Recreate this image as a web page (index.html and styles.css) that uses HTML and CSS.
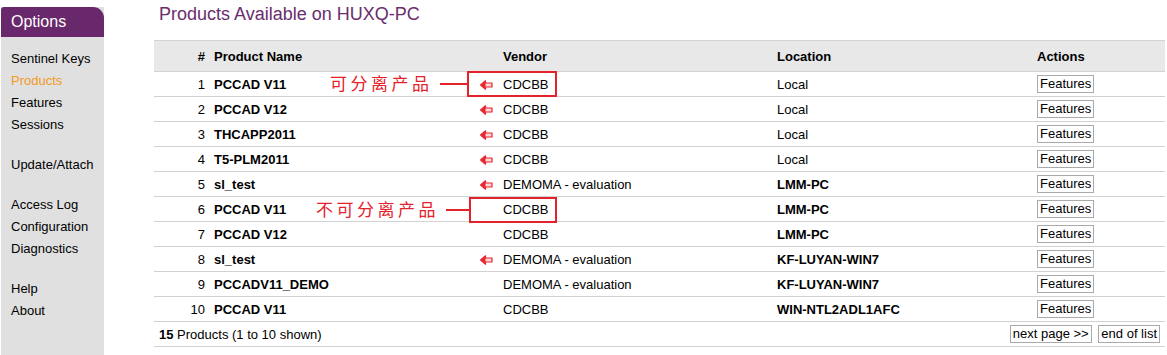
FILE: index.html
```html
<!DOCTYPE html>
<html lang="en">
<head>
  <meta charset="UTF-8" />
  <title>Products Available on HUXQ-PC</title>
  <link rel="stylesheet" href="styles.css">
</head>
<body>

<div class="page">
  <!-- Sidebar -->
  <nav class="sidebar">
    <div class="sidebar-title">Options</div>
    <div class="sidebar-links">
      <div class="link-group">
        <a href="#">Sentinel Keys</a>
        <a href="#" class="active">Products</a>
        <a href="#">Features</a>
        <a href="#">Sessions</a>
      </div>
      <div class="link-group">
        <a href="#">Update/Attach</a>
      </div>
      <div class="link-group">
        <a href="#">Access Log</a>
        <a href="#">Configuration</a>
        <a href="#">Diagnostics</a>
      </div>
      <div class="link-group">
        <a href="#">Help</a>
        <a href="#">About</a>
      </div>
    </div>
  </nav>

  <main class="content">
    <h1 class="page-title">Products Available on HUXQ-PC</h1>

    <div class="table-wrap">
      <table class="products">
        <colgroup>
          <col class="c-num"><col class="c-name"><col class="c-arrow"><col class="c-vendor"><col class="c-loc"><col class="c-act">
        </colgroup>
        <thead>
          <tr>
            <th class="num">#</th>
            <th>Product Name</th>
            <th></th>
            <th>Vendor</th>
            <th>Location</th>
            <th>Actions</th>
          </tr>
        </thead>
        <tbody id="rows"></tbody>
        <tfoot>
          <tr>
            <td colspan="4" class="summary"><b>15</b> Products (1 to 10 shown)</td>
            <td colspan="2" class="pager">
              <button class="btn">next page &gt;&gt;</button>
              <button class="btn">end of list</button>
            </td>
          </tr>
        </tfoot>
      </table>

      <!-- annotations -->
      <div class="note note-1">
        <span class="note-text">可分离产品</span>
        <span class="note-line"></span>
        <span class="note-box"></span>
      </div>
      <div class="note note-2">
        <span class="note-text">不可分离产品</span>
        <span class="note-line"></span>
        <span class="note-box"></span>
      </div>
    </div>
  </main>
</div>

<script>
  const products = [
    { name: 'PCCAD V11', detach: true, vendor: 'CDCBB', loc: 'Local', remote: false },
    { name: 'PCCAD V12', detach: true, vendor: 'CDCBB', loc: 'Local', remote: false },
    { name: 'THCAPP2011', detach: true, vendor: 'CDCBB', loc: 'Local', remote: false },
    { name: 'T5-PLM2011', detach: true, vendor: 'CDCBB', loc: 'Local', remote: false },
    { name: 'sl_test', detach: true, vendor: 'DEMOMA - evaluation', loc: 'LMM-PC', remote: true },
    { name: 'PCCAD V11', detach: false, vendor: 'CDCBB', loc: 'LMM-PC', remote: true },
    { name: 'PCCAD V12', detach: false, vendor: 'CDCBB', loc: 'LMM-PC', remote: true },
    { name: 'sl_test', detach: true, vendor: 'DEMOMA - evaluation', loc: 'KF-LUYAN-WIN7', remote: true },
    { name: 'PCCADV11_DEMO', detach: false, vendor: 'DEMOMA - evaluation', loc: 'KF-LUYAN-WIN7', remote: true },
    { name: 'PCCAD V11', detach: false, vendor: 'CDCBB', loc: 'WIN-NTL2ADL1AFC', remote: true }
  ];

  const ARROW = '<svg class="arrow" width="13" height="10" viewBox="0 0 13 10">' +
    '<path d="M0.5 5 L5.5 0.8 L5.5 3 L12 3 L12 7 L5.5 7 L5.5 9.2 Z" fill="#fbd5d7" stroke="#e8242d" stroke-width="1.2" stroke-linejoin="round"/>' +
    '<path d="M1 5 L5.5 1.3 L5.5 8.7 Z" fill="#e8242d"/></svg>';

  const tbody = document.getElementById('rows');
  products.forEach((p, i) => {
    const tr = document.createElement('tr');
    tr.innerHTML = `
      <td class="num">${i + 1}</td>
      <td><b>${p.name}</b></td>
      <td class="arrow-cell">${p.detach ? ARROW : ''}</td>
      <td>${p.vendor}</td>
      <td>${p.remote ? '<b>' + p.loc + '</b>' : p.loc}</td>
      <td><button class="btn">Features</button></td>
    `;
    tbody.appendChild(tr);
  });
</script>

</body>
</html>
```

FILE: styles.css
```css
body {
  margin: 0;
  font-family: "Liberation Sans", Arial, sans-serif;
  font-size: 13px;
  color: #000;
  background: #fff;
}

.page {
  display: flex;
  align-items: stretch;
  min-height: 355px;
}

/* Sidebar */
.sidebar {
  width: 103px;
  margin: 7px 0 0 1px;
  background: #e0e0e0;
  flex-shrink: 0;
}

.sidebar-title {
  height: 30px;
  line-height: 30px;
  padding-left: 10px;
  background: #69286b;
  color: #fff;
  font-size: 16px;
  border-radius: 3px 11px 0 0;
}

.sidebar-links {
  padding: 11px 0 0 10px;
  display: flex;
  flex-direction: column;
  gap: 18px;
}

.link-group a {
  display: block;
  line-height: 22px;
  color: #000;
  text-decoration: none;
}

.link-group a.active {
  color: #f39a1e;
}

/* Content */
.content {
  padding-left: 50px;
  flex: 1;
}

.page-title {
  margin: 3px 0 0 5px;
  font-size: 18px;
  font-weight: normal;
  line-height: 22px;
  color: #6a2d6c;
}

.table-wrap {
  position: relative;
  width: 1011px;
  margin-top: 15px;
}

.products {
  width: 1011px;
  table-layout: fixed;
  border-collapse: collapse;
}

.c-num { width: 57px; }
.c-name { width: 261px; }
.c-arrow { width: 28px; }
.c-vendor { width: 274px; }
.c-loc { width: 260px; }
.c-act { width: 131px; }

.products th,
.products td {
  padding: 0 3px;
  text-align: left;
  white-space: nowrap;
  border-bottom: 1px solid #d2d2d2;
}

.products thead th {
  height: 30px;
  background: #e8e8e8;
  border-top: 1px solid #d2d2d2;
  font-weight: bold;
}

.products tbody td,
.products tfoot td {
  height: 24px;
}

.products .num {
  text-align: right;
  padding-right: 6px;
}

.products .summary {
  padding-left: 5px;
}

.arrow-cell {
  text-align: center !important;
}

.arrow {
  display: inline-block;
  vertical-align: -1px;
}

.btn {
  font-family: "Liberation Sans", Arial, sans-serif;
  font-size: 13px;
  line-height: 13px;
  padding: 1px 2px 2px;
  background: #fff;
  color: #000;
  border: 1px solid #aaa;
  border-radius: 0;
  margin: 0;
}

.pager {
  text-align: right !important;
  padding-right: 5px !important;
}

.pager .btn + .btn {
  margin-left: 3px;
}

/* Red annotations */
.note {
  position: absolute;
  height: 26px;
}

.note-1 { top: 31px; left: 162px; width: 241px; }
.note-2 { top: 157px; left: 148px; width: 255px; }

.note-text {
  position: absolute;
  left: 14px;
  top: 1px;
  font-family: "Noto Sans CJK SC", sans-serif;
  font-size: 17px;
  line-height: 22px;
  letter-spacing: 3.5px;
  color: #e3222b;
}

.note-line {
  position: absolute;
  top: 12px;
  height: 2px;
  background: #e3222b;
}

.note-1 .note-line { left: 124px; width: 27px; }
.note-2 .note-line { left: 144px; width: 23px; }

.note-box {
  position: absolute;
  top: 0;
  height: 26px;
  border: 2px solid #e3222b;
  box-sizing: border-box;
}

.note-1 .note-box { left: 151px; width: 90px; }
.note-2 .note-box { left: 167px; width: 88px; }
```
